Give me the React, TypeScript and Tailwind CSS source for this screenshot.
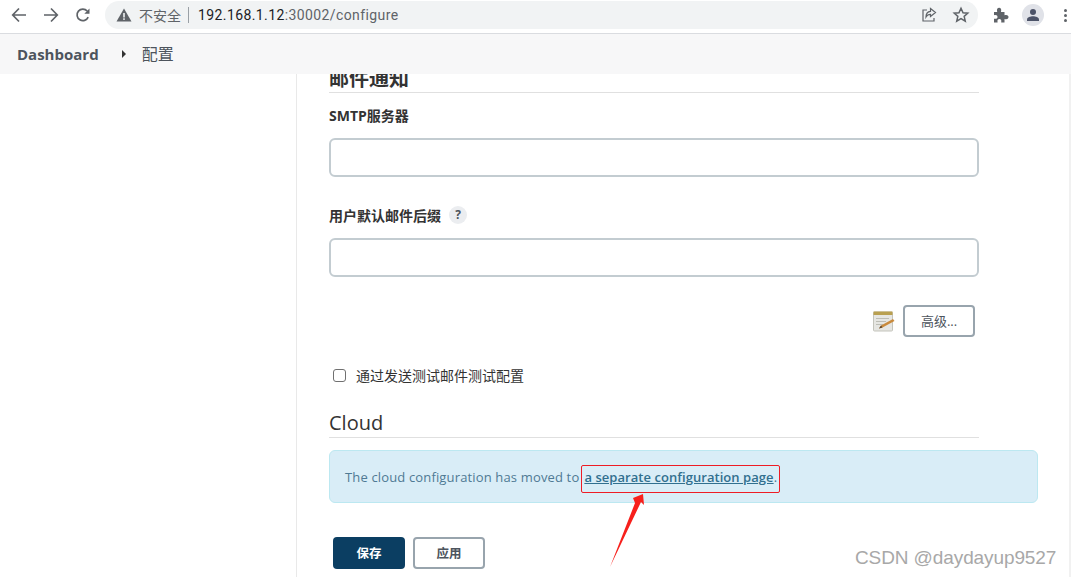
const sans = "font-['Open_Sans','Noto_Sans_CJK_SC',sans-serif]";

function BrowserBar() {
  return (
    <div className="flex h-[34px] shrink-0 items-center border-b border-[#dadce0] bg-white pb-[3px] pl-[11px]">
      <svg width="16" height="16" viewBox="0 0 16 16" fill="none" stroke="#5f6368" strokeWidth="1.7" className="shrink-0">
        <path d="M15 8H2M8 1.5 1.7 8 8 14.5" />
      </svg>
      <svg width="16" height="16" viewBox="0 0 16 16" fill="none" stroke="#5f6368" strokeWidth="1.7" className="ml-[16px] shrink-0">
        <path d="M1 8h13M8 1.5 14.3 8 8 14.5" />
      </svg>
      <svg width="16" height="16" viewBox="0 0 16 16" fill="none" className="ml-[16px] shrink-0">
        <path d="M13.2 10.2A5.8 5.8 0 1 1 12.2 4" stroke="#5f6368" strokeWidth="1.7" />
        <path d="M14.5 1.5v5.2H9.3z" fill="#5f6368" />
      </svg>
      <div className="ml-[14px] flex h-[28px] w-[873px] shrink-0 items-center rounded-full bg-[#f1f3f4] pl-[11px]">
        <svg width="16" height="14" viewBox="0 0 16 14" className="shrink-0">
          <path d="M8 0.5 15.500 13.500H0.500z" fill="#5f6368" />
          <rect x="7.200" y="5" width="1.600" height="4.500" fill="#f1f3f4" />
          <rect x="7.200" y="10.300" width="1.600" height="1.600" fill="#f1f3f4" />
        </svg>
        <span className="ml-[7px] text-[14px] text-[#5f6368]">不安全</span>
        <span className="ml-[7px] h-[16px] w-px bg-[#9aa0a6]" />
        <span className="ml-[9px] font-['Roboto',sans-serif] text-[14px] tracking-[0.4px] text-[#202124]">
          192.168.1.12<span className="text-[#5f6368]">:30002/configure</span>
        </span>
        <svg width="16" height="16" viewBox="0 0 16 16" fill="none" stroke="#5f6368" strokeWidth="1.2" className="ml-auto shrink-0">
          <path d="M6 3H2v11h11v-3" />
          <path d="M9.500 1.500 14.500 5.500 9.500 9.500V7.400C7.500 7.400 6 8.200 5 10c0-3.200 1.600-5.300 4.500-5.600z" />
        </svg>
        <svg width="18" height="18" viewBox="0 0 24 24" fill="none" stroke="#5f6368" strokeWidth="2" className="ml-[15px] mr-[8px] shrink-0">
          <path d="m12 3 2.700 6 6.300.6-4.800 4.200 1.500 6.400L12 16.800l-5.700 3.400 1.500-6.400L3 9.600 9.300 9z" />
        </svg>
      </div>
      <svg width="16" height="16" viewBox="0 0 16 16" className="ml-[15px] shrink-0">
        <path d="M1 5h3.200c-.8-3 .4-4.200 1.900-4.200S8.800 2 8 5h3.500v3.200c3-.8 4 .5 4 1.900s-1 2.700-4 1.900V15.500H8.200c.6-2.600-.5-3.500-1.800-3.500s-2.400.9-1.800 3.500H1v-3.800c2.600.6 3.500-.5 3.500-1.700S3.600 7.600 1 8.300z" fill="#5f6368" />
      </svg>
      <div className="ml-[13px] flex h-[22px] w-[22px] shrink-0 items-center justify-center rounded-full bg-[#e0e2e8]">
        <svg width="14" height="14" viewBox="0 0 14 14" fill="#4c5368">
          <circle cx="7" cy="4" r="3" />
          <path d="M1 13v-1.500C1 9.300 4.500 8.200 7 8.200s6 1.100 6 3.300V13z" />
        </svg>
      </div>
      <div className="ml-[20px] flex flex-col gap-[2px]">
        <span className="h-[3px] w-[3px] rounded-full bg-[#5f6368]" />
        <span className="h-[3px] w-[3px] rounded-full bg-[#5f6368]" />
        <span className="h-[3px] w-[3px] rounded-full bg-[#5f6368]" />
      </div>
    </div>
  );
}

function Field({ label, help }: { label: string; help?: boolean }) {
  return (
    <div>
      <div className="flex h-[20px] items-center pb-[2px]">
        <label className="text-[14px] font-bold text-[#333]">{label}</label>
        {help ? (
          <span className="ml-[8px] flex h-[18px] w-[18px] items-center justify-center rounded-full bg-[#ebedf0] text-[12px] font-bold text-[#4d545d]">
            ?
          </span>
        ) : null}
      </div>
      <input className="mt-[12px] block h-[39px] w-full rounded-[6px] border-2 border-[#c3ccd1] bg-white" />
    </div>
  );
}

export default function App() {
  return (
    <div className={`relative flex h-[577px] w-[1071px] flex-col overflow-hidden bg-white ${sans}`}>
      <BrowserBar />

      <div className="relative z-10 flex h-[40px] shrink-0 items-center bg-[#f7f7f8] pl-[17px] text-[#4d545d]">
        <span className="text-[15px] font-bold">Dashboard</span>
        <span className="ml-[23px] h-0 w-0 border-y-[4px] border-l-[4px] border-y-transparent border-l-[#333]" />
        <span className="ml-[16px] text-[16px]">配置</span>
      </div>

      <div className="flex min-h-0 flex-1">
        <aside className="w-[297px] shrink-0 border-r border-[#e9e9e9]" />
        <main className="min-w-0 flex-1 pl-[32px] pr-[33px]">
          <div className="w-[650px]">
            <h2 className="-mt-[7px] border-b border-[#e0e0e0] pb-[2px] text-[20px] leading-[23px] font-bold text-[#333]">
              邮件通知
            </h2>
            <div className="mt-[13px]">
              <Field label="SMTP服务器" />
            </div>
            <div className="mt-[29px]">
              <Field label="用户默认邮件后缀" help />
            </div>
            <div className="mt-[28px] flex items-center justify-end pr-[4px]">
              <svg width="24" height="24" viewBox="0 0 24 24" className="shrink-0">
                <rect x="2.500" y="3" width="19" height="19" rx="1" fill="#e6e6e2" stroke="#c4c4bc" />
                <rect x="2.500" y="2.500" width="19" height="3.500" fill="#b9a050" />
                <path d="M5 9.500h13M5 12.500h10M5 15.500h7" stroke="#bdbdb5" />
                <path d="m8 19.500 2-3 12-6.500 1.500 2-12 6.500z" fill="#c98a3c" />
                <path d="m8 19.500 2-3 1.500 2z" fill="#5a4630" />
              </svg>
              <button className="ml-[8px] h-[32px] w-[72px] rounded-[4px] border-2 border-[#98a4ad] bg-white pt-[2px] text-[13px] text-[#4d545d]">
                高级...
              </button>
            </div>
            <div className="mt-[29px] flex h-[18px] items-center">
              <span className="ml-[4px] h-[13px] w-[13px] rounded-[3px] border border-[#707070] bg-white" />
              <span className="ml-[10px] text-[14px] text-[#333]">通过发送测试邮件测试配置</span>
            </div>
            <h2 className="mt-[26px] border-b border-[#e0e0e0] pb-[1px] text-[20px] leading-[26px] font-normal text-[#333]">
              Cloud
            </h2>
          </div>

          <div className="mt-[12px] flex h-[53px] w-[709px] items-center rounded-[6px] border border-[#bce8f1] bg-[#d9edf7] pl-[15px] pt-[2px] text-[13px] text-[#4f7a94]">
            <span className="tracking-[0.15px]">The cloud configuration has moved to</span>
            <a className="ml-[5px] font-semibold tracking-[0.05px] text-[#31708f] underline">a separate configuration page</a>
            <span>.</span>
          </div>

          <div className="mt-[34px] flex gap-[8px] pl-[4px]">
            <button className="h-[32px] w-[72px] rounded-[4px] bg-[#0b3e62] pt-[2px] text-[12.5px] font-bold text-white">保存</button>
            <button className="h-[32px] w-[72px] rounded-[4px] border-2 border-[#98a4ad] bg-white pt-[2px] text-[12.5px] font-bold text-[#4d545d]">
              应用
            </button>
          </div>
        </main>
      </div>

      {/* annotation on top of the screenshot */}
      <div className="absolute left-[581px] top-[465px] h-[28px] w-[199px] rounded-[2px] border-[1.5px] border-[#ee1c25]" />
      <svg width="40" height="80" viewBox="0 0 40 80" className="absolute left-[606px] top-[490px]">
        <path d="M4 77 29 13 27 8 37 4 38 15 35 12z" fill="#f7201c" />
      </svg>
      <span className="absolute left-[855px] top-[544px] font-['Liberation_Sans',sans-serif] text-[19px] tracking-[-0.1px] text-[#a8a8a8]">
        CSDN @daydayup9527
      </span>
      <div className="absolute right-0 top-[74px] h-[503px] w-[2px] bg-[#f1f1f1]" />
    </div>
  );
}
